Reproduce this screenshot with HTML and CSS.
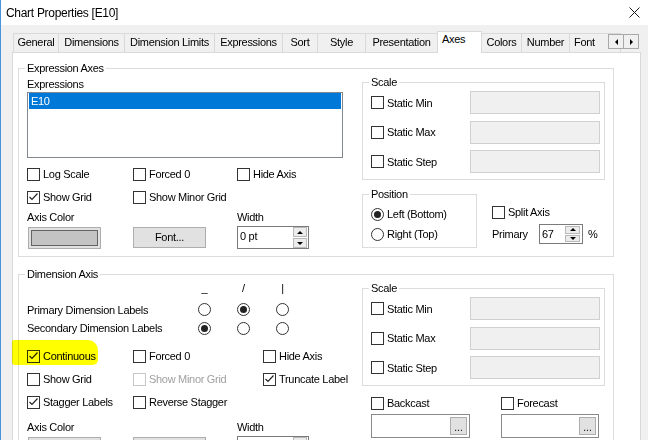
FILE: index.html
```html
<!DOCTYPE html>
<html lang="en">
<head>
<meta charset="utf-8">
<title>Chart Properties</title>
<link rel="stylesheet" href="styles.css">
</head>
<body>
<div class="window">
  <div class="titlebar">
    <span class="title">Chart Properties [E10]</span>
    <svg class="close" width="11" height="11" viewBox="0 0 11 11"><path d="M0.5 0.5 L10.5 10.5 M10.5 0.5 L0.5 10.5" stroke="#1a1a1a" stroke-width="1" fill="none"/></svg>
  </div>
  <div class="tabstrip">
    <div class="tab w-general">General</div>
    <div class="tab w-dimensions">Dimensions</div>
    <div class="tab w-dimlimits">Dimension Limits</div>
    <div class="tab w-expressions">Expressions</div>
    <div class="tab w-sort">Sort</div>
    <div class="tab w-style">Style</div>
    <div class="tab w-presentation">Presentation</div>
    <div class="tab active w-axes">Axes</div>
    <div class="tab w-colors">Colors</div>
    <div class="tab w-number">Number</div>
    <div class="tab w-font">Font</div>
    <div class="tabscroll">
      <span class="scrollbtn"><span class="tri-left"></span></span>
      <span class="scrollbtn"><span class="tri-right"></span></span>
    </div>
  </div>
  <div class="panel">
    <fieldset class="group main">
      <legend>Expression Axes</legend>
      <div class="cols">
        <div class="leftcol">
          <div class="lbl">Expressions</div>
          <div class="listbox"><div class="item selected">E10</div></div>
          <div class="checkgrid cg-a">
            <label class="chk"><span class="box"></span>Log Scale</label>
            <label class="chk"><span class="box"></span>Forced 0</label>
            <label class="chk"><span class="box"></span>Hide Axis</label>
            <label class="chk"><span class="box"><svg width="11" height="11" viewBox="0 0 11 11"><path d="M1.5 5 L4 7.5 L9.5 1.5" fill="none" stroke="#222" stroke-width="1.2"/></svg></span>Show Grid</label>
            <label class="chk"><span class="box"></span>Show Minor Grid</label>
          </div>
          <div class="fieldrow labels"><span>Axis Color</span><span></span><span>Width</span></div>
          <div class="fieldrow controls">
            <div class="colorbtn"><span class="swatch"></span></div>
            <div class="btn">Font...</div>
            <div class="spin wide"><span class="val">0 pt</span><span class="spinbtns"><span class="up"></span><span class="down"></span></span></div>
          </div>
        </div>
        <div class="rightcol">
          <fieldset class="group scale">
            <legend>Scale</legend>
            <div class="srow"><label class="chk"><span class="box"></span>Static Min</label><span class="sinput"></span></div>
            <div class="srow"><label class="chk"><span class="box"></span>Static Max</label><span class="sinput"></span></div>
            <div class="srow"><label class="chk"><span class="box"></span>Static Step</label><span class="sinput"></span></div>
          </fieldset>
          <div class="posrow">
            <fieldset class="group position">
              <legend>Position</legend>
              <label class="rad"><span class="circle on"></span>Left (Bottom)</label>
              <label class="rad"><span class="circle"></span>Right (Top)</label>
            </fieldset>
            <div class="split">
              <label class="chk"><span class="box"></span>Split Axis</label>
              <div class="primary">
                <span class="plabel">Primary</span>
                <div class="spin narrow"><span class="val">67</span><span class="spinbtns"><span class="up"></span><span class="down"></span></span></div>
                <span class="pct">%</span>
              </div>
            </div>
          </div>
        </div>
      </div>
    </fieldset>

    <fieldset class="group main dim">
      <legend>Dimension Axis</legend>
      <div class="cols">
        <div class="leftcol">
          <div class="dimgrid">
            <span></span><span class="sym">_</span><span class="sym">/</span><span class="sym">|</span>
            <span class="dlabel">Primary Dimension Labels</span><span class="circle"></span><span class="circle on"></span><span class="circle"></span>
            <span class="dlabel">Secondary Dimension Labels</span><span class="circle on"></span><span class="circle"></span><span class="circle"></span>
          </div>
          <div class="checkgrid cg-b">
            <label class="chk"><span class="box"><svg width="11" height="11" viewBox="0 0 11 11"><path d="M1.5 5 L4 7.5 L9.5 1.5" fill="none" stroke="#222" stroke-width="1.2"/></svg></span>Continuous</label>
            <label class="chk"><span class="box"></span>Forced 0</label>
            <label class="chk"><span class="box"></span>Hide Axis</label>
            <label class="chk"><span class="box"></span>Show Grid</label>
            <label class="chk disabled"><span class="box"></span>Show Minor Grid</label>
            <label class="chk"><span class="box"><svg width="11" height="11" viewBox="0 0 11 11"><path d="M1.5 5 L4 7.5 L9.5 1.5" fill="none" stroke="#222" stroke-width="1.2"/></svg></span>Truncate Label</label>
            <label class="chk"><span class="box"><svg width="11" height="11" viewBox="0 0 11 11"><path d="M1.5 5 L4 7.5 L9.5 1.5" fill="none" stroke="#222" stroke-width="1.2"/></svg></span>Stagger Labels</label>
            <label class="chk"><span class="box"></span>Reverse Stagger</label>
          </div>
          <div class="fieldrow labels low"><span>Axis Color</span><span></span><span>Width</span></div>
          <div class="fieldrow controls">
            <div class="colorbtn"><span class="swatch"></span></div>
            <div class="btn"></div>
            <div class="spin wide"><span class="val"></span><span class="spinbtns"><span class="up"></span><span class="down"></span></span></div>
          </div>
        </div>
        <div class="rightcol">
          <fieldset class="group scale">
            <legend>Scale</legend>
            <div class="srow"><label class="chk"><span class="box"></span>Static Min</label><span class="sinput"></span></div>
            <div class="srow"><label class="chk"><span class="box"></span>Static Max</label><span class="sinput"></span></div>
            <div class="srow"><label class="chk"><span class="box"></span>Static Step</label><span class="sinput"></span></div>
          </fieldset>
          <div class="forecast">
            <div class="fcol">
              <label class="chk"><span class="box"></span>Backcast</label>
              <div class="finput w99"><span class="dots">...</span></div>
            </div>
            <div class="fcol">
              <label class="chk"><span class="box"></span>Forecast</label>
              <div class="finput w98"><span class="dots">...</span></div>
            </div>
          </div>
        </div>
      </div>
    </fieldset>
  </div>
  <div class="highlight"></div>
</div>
</body>
</html>
```

FILE: styles.css
```css
* { box-sizing: border-box; }
html, body { margin: 0; padding: 0; }
body {
  width: 648px; height: 440px; overflow: hidden;
  background: #f0f0f0;
  font-family: "Liberation Sans", Arial, sans-serif;
  font-size: 11px; letter-spacing: -0.3px; line-height: 14px; color: #000;
}
.window {
  position: relative; width: 648px; height: 440px; overflow: hidden;
  background: #f0f0f0; border-left: 1px solid #4a94dc;
}
.titlebar {
  height: 25px; background: #fff;
  display: flex; align-items: center; justify-content: space-between;
  padding: 0 8px 0 5px;
}
.title { font-size: 12px; padding-top: 1px; }
.close { display: block; }

.tabstrip {
  position: relative; display: flex; align-items: flex-start;
  height: 27px; padding: 8px 0 0 12px;
}
.tab {
  flex: none; height: 19px; margin-left: -1px;
  border: 1px solid #d9d9d9; border-bottom: 0; background: #f0f0f0;
  line-height: 17px; text-align: center; white-space: nowrap;
}
.tab:first-child { margin-left: 0; }
.tab.active {
  position: relative; z-index: 2; height: 22px; margin-top: -2px;
  background: #fff; line-height: 15px; text-align: left; padding-left: 4px;
}
.w-general { width: 46px; }
.w-dimensions { width: 67px; }
.w-dimlimits { width: 91px; }
.w-expressions { width: 69px; }
.w-sort { width: 36px; }
.w-style { width: 49px; }
.w-presentation { width: 73px; }
.w-axes { width: 45px; }
.w-colors { width: 41px; }
.w-number { width: 49px; }
.w-font { width: 52px; text-align: left; padding-left: 4px; }
.tabscroll {
  position: absolute; left: 608px; top: 9px; z-index: 3;
  display: flex;
}
.scrollbtn {
  width: 16px; height: 15px; margin-left: -1px;
  border: 1px solid #a8a8a8; background: #f0f0f0;
  display: flex; align-items: center; justify-content: center;
}
.tri-left { width: 0; height: 0; border-top: 3px solid transparent; border-bottom: 3px solid transparent; border-right: 3px solid #000; }
.tri-right { width: 0; height: 0; border-top: 3px solid transparent; border-bottom: 3px solid transparent; border-left: 3px solid #000; }

.panel {
  margin-left: 11px; width: 629px; height: 400px;
  background: #fff; border: 1px solid #d9d9d9;
  padding: 8px 0 0 5px;
}
.group {
  margin: 0; min-width: 0;
  padding: 0 8px 7px 8px;
  border: 1px solid #dcdcdc;
}
.group > legend { padding: 0 2px; margin-left: -2px; line-height: 14px; }
.main { width: 596px; }
.dim { margin-top: 10px; }
.cols { display: grid; grid-template-columns: 316px 243px; column-gap: 19px; align-items: start; }

.lbl { padding-top: 2px; height: 16px; }
.listbox { margin-top: 1px; height: 66px; border: 1px solid #828790; padding: 0 1px; background: #fff; }
.item { height: 16px; line-height: 16px; padding-left: 2px; }
.item.selected { background: #0078d7; color: #fff; }

.chk { display: flex; align-items: center; height: 18px; white-space: nowrap; }
.box {
  flex: none; width: 13px; height: 13px; margin-right: 3px;
  border: 1px solid #333; background: #fff;
  display: flex; align-items: center; justify-content: center;
}
.box svg { display: block; }
.chk.disabled { color: #a0a0a0; }
.chk.disabled .box { border-color: #c6c6c6; }

.checkgrid { display: grid; grid-template-rows: 18px 18px; row-gap: 5px; margin-top: 7px; }
.cg-a { grid-template-columns: 106px 104px auto; }
.cg-b { grid-template-columns: 106px 130px auto; grid-template-rows: 18px 18px 18px; margin-top: 10px; }

.fieldrow { display: grid; grid-template-columns: 106px 104px auto; }
.labels { margin-top: 4px; height: 14px; }
.labels.low { margin-top: 9px; }
.controls { margin-top: 3px; align-items: start; }
.colorbtn {
  margin-left: 1px; width: 73px; height: 22px;
  border: 1px solid #adadad; background: #e1e1e1; padding: 2px;
}
.swatch { display: block; height: 100%; background: #c3c3c3; border: 1px solid #646464; }
.btn {
  width: 73px; height: 21px; border: 1px solid #adadad; background: #e1e1e1;
  text-align: center; line-height: 19px;
}
.spin { display: flex; border: 1px solid #7a7a7a; background: #fff; }
.spin.wide { width: 72px; height: 23px; margin-top: -1px; }
.spin .val { flex: 1; padding: 2px 0 0 2px; line-height: 14px; }
.spinbtns { display: flex; flex-direction: column; width: 15px; padding: 0 1px 0 0; gap: 1px; }
.spinbtns span {
  flex: 1; background: #ececec; border: 1px solid #b9b9b9;
  display: flex; align-items: center; justify-content: center;
}
.up::after { content: ""; border-left: 3px solid transparent; border-right: 3px solid transparent; border-bottom: 3px solid #000; }
.down::after { content: ""; border-left: 3px solid transparent; border-right: 3px solid transparent; border-top: 3px solid #000; }

.scale { width: 243px; padding: 2px 4px 6px 8px; }
.srow { display: flex; align-items: center; justify-content: space-between; height: 23px; }
.srow + .srow { margin-top: 6.5px; }
.sinput { width: 130px; height: 23px; border: 1px solid #d0d0d0; background: #f0f0f0; }

.posrow { display: flex; margin-top: 7px; }
.position { width: 115px; padding: 3px 4px 3px 8px; }
.rad { display: flex; align-items: center; height: 20px; white-space: nowrap; }
.circle {
  flex: none; width: 13px; height: 13px; margin-right: 3px;
  border: 1px solid #333; border-radius: 50%; background: #fff;
  display: flex; align-items: center; justify-content: center;
}
.circle.on::after { content: ""; width: 7px; height: 7px; border-radius: 50%; background: #222; }
.split { margin-left: 15px; padding-top: 16px; }
.primary { display: flex; align-items: center; height: 20px; margin-top: 3px; }
.plabel { width: 47px; }
.spin.narrow { width: 44px; height: 20px; }
.spin.narrow .val { padding-top: 2px; }
.spin.narrow .spinbtns { width: 17px; padding: 1px 2px 1px 0; }
.pct { margin-left: 5px; }

.dimgrid { display: grid; grid-template-columns: 171px 39px 39px 39px; grid-template-rows: 19px 19px 18px; align-items: center; }
.sym { width: 13px; text-align: center; line-height: 14px; align-self: start; }
.dimgrid .circle { margin-right: 0; }

.forecast { display: grid; grid-template-columns: 130px 113px; margin-top: 8px; padding-left: 9px; }
.finput {
  margin-top: 2px; height: 24px;
  display: flex; justify-content: flex-end; align-items: center;
  border: 1px solid #8a8a8a; background: #fff; padding-right: 2px;
}
.w99 { width: 99px; }
.w98 { width: 98px; }
.dots {
  width: 17px; height: 18px; background: #e1e1e1; border: 1px solid #adadad;
  text-align: center; line-height: 20px; font-size: 10px; letter-spacing: 0;
}

.highlight {
  position: absolute; left: 11px; top: 340px; width: 86px; height: 25px;
  background: #ffff00; mix-blend-mode: multiply;
  border-radius: 2px 10px 5px 3px;
}
```
